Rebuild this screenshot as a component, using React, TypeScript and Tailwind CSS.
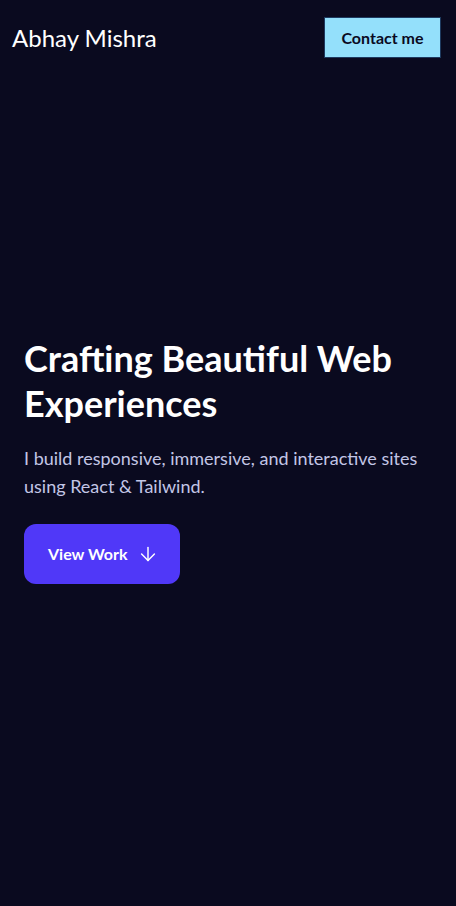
import { ArrowDown } from 'lucide-react';

export default function App() {
  return (
    <div className="min-h-screen bg-[#0a0a1f] text-white font-['Lato',sans-serif] flex flex-col">
      <header className="flex items-center justify-between pl-3 pr-[15px] pt-[17px]">
        <span className="text-2xl text-white">Abhay Mishra</span>
        <button className="w-[117px] h-[41px] flex items-center justify-center bg-[#94e0fb] border border-[#1e3a5f] text-[#0a0a1f] font-bold text-base">
          Contact me
        </button>
      </header>
      <section className="px-6 pt-[278px]">
        <h1 className="text-4xl leading-tight font-bold text-white">
          Crafting Beautiful Web Experiences
        </h1>
        <p className="mt-[18px] text-lg leading-7 text-[#c3c6e6]">
          I build responsive, immersive, and interactive sites using React &amp; Tailwind.
        </p>
        <button className="mt-6 w-[156px] h-[60px] flex items-center gap-[10px] pl-6 bg-[#5038f8] rounded-xl text-white font-bold text-base">
          View Work
          <ArrowDown size={22} strokeWidth={1.6} />
        </button>
      </section>
    </div>
  );
}
